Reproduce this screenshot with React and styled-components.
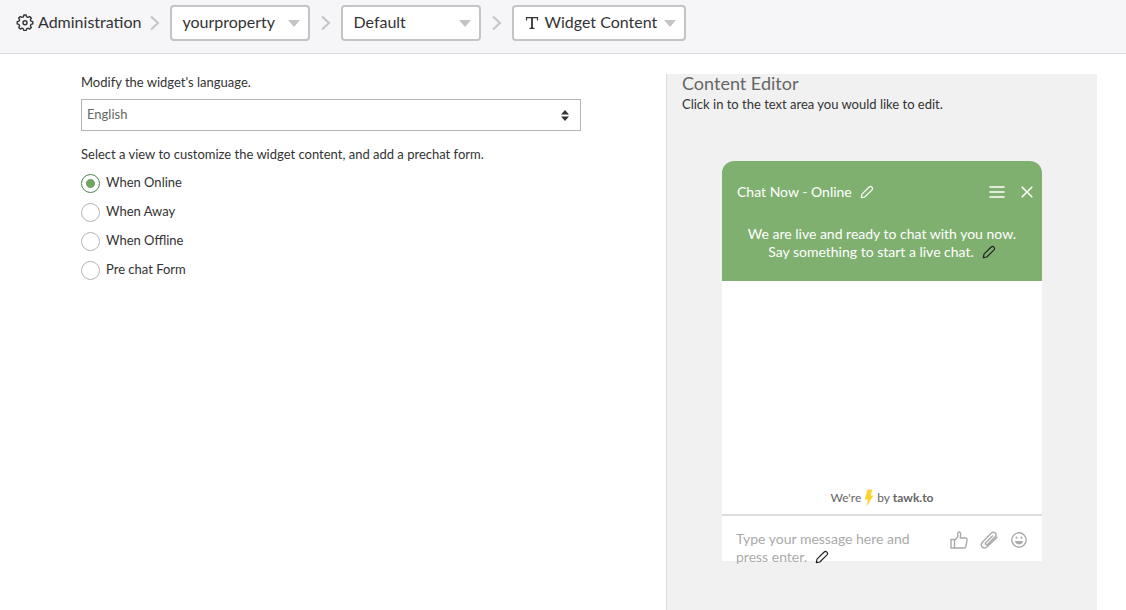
import React, { useState } from "react";
import styled, { createGlobalStyle } from "styled-components";

const GlobalStyle = createGlobalStyle`
  * {
    box-sizing: border-box;
  }

  body {
    margin: 0;
    background-color: #fff;
    color: #333;
    font-family: Lato, "Liberation Sans", sans-serif;
    font-size: 13px;
    line-height: 20px;
  }
`;

const Header = styled.header`
  display: flex;
  align-items: center;
  flex-wrap: wrap;
  gap: 10px;
  min-height: 54px;
  padding: 5px 16px 12px;
  background-color: #f6f6f9;
  border-bottom: 1px solid #ddd;
`;

const AdminLink = styled.a`
  display: flex;
  align-items: center;
  gap: 4px;
  margin-right: -2px;
  padding-bottom: 2px;
  color: #333;
  font-size: 16px;
  text-decoration: none;
`;

const Separator = styled.svg`
  width: 11px;
  height: 16px;
  fill: none;
  stroke: #c4c4c4;
  stroke-width: 2;
`;

const Crumb = styled.div`
  position: relative;
  width: ${(props) => (props.$wide ? "174px" : "140px")};
`;

const CrumbSelect = styled.select`
  appearance: none;
  display: block;
  width: 100%;
  height: 36px;
  padding: 0 20px 4px ${(props) => (props.$icon ? "30px" : "10px")};
  border: 2px solid #c4c4c4;
  border-radius: 4px;
  background-color: #fff;
  color: #333;
  font-family: inherit;
  font-size: 16px;
`;

const Caret = styled.svg`
  position: absolute;
  top: 15px;
  right: 10px;
  width: 12px;
  height: 7px;
  fill: #c4c4c4;
  pointer-events: none;
`;

const TextIcon = styled.svg`
  position: absolute;
  top: 11px;
  left: 13px;
  width: 14px;
  height: 14px;
  fill: none;
  stroke: #333;
  pointer-events: none;
`;

const Main = styled.main`
  display: grid;
  grid-template-columns: 585fr 431fr;
  padding: 20px 29px 0 81px;
`;

const Settings = styled.section`
  padding-right: 85px;
`;

const FieldLabel = styled.label`
  display: block;
  margin-bottom: 8px;
  line-height: 17px;
`;

const LanguageBox = styled.div`
  position: relative;
  margin-bottom: 13px;
`;

const LanguageSelect = styled.select`
  appearance: none;
  display: block;
  width: 100%;
  height: 32px;
  padding: 0 30px 2px 5px;
  border: 1px solid #b4b4b4;
  border-radius: 0;
  background-color: #fff;
  color: #666;
  font-family: inherit;
  font-size: 13px;
`;

const Sorter = styled.svg`
  position: absolute;
  top: 11px;
  right: 12px;
  width: 8px;
  height: 11px;
  fill: #333;
  pointer-events: none;
`;

const Views = styled.fieldset`
  margin: 0;
  padding: 0;
  border: none;
`;

const Legend = styled.legend`
  margin-bottom: 8px;
  padding: 0;
`;

const ViewOption = styled.label`
  display: flex;
  align-items: center;
  gap: 6px;
  height: 20px;
  margin-bottom: 9px;
  cursor: pointer;
`;

const Radio = styled.input`
  appearance: none;
  width: 19px;
  height: 19px;
  margin: 2px 0 0;
  border: 1px solid #b4b4b4;
  border-radius: 50%;
  background-color: #fff;

  &:checked {
    border-color: #4f8450;
    background-image: radial-gradient(circle, #6da561 4px, transparent 5px);
  }
`;

const Editor = styled.section`
  min-height: calc(100vh - 74px);
  border-left: 1px solid #ddd;
  background-color: #f1f1f1;
`;

const EditorHead = styled.div`
  padding: 0 15px;
`;

const EditorTitle = styled.h1`
  margin: 0 0 2px;
  color: #666;
  font-size: 18px;
  font-weight: 400;
  line-height: 18px;
`;

const EditorHint = styled.p`
  margin: 0 0 47px;
`;

const Widget = styled.div`
  display: flex;
  flex-direction: column;
  width: 320px;
  max-width: 100%;
  height: 400px;
  margin: 0 auto;
  border-radius: 12px 12px 0 0;
  background-color: #fff;
  font-size: 14px;
  line-height: 18px;
`;

const WidgetHead = styled.div`
  height: 120px;
  padding: 20px 8px 0 15px;
  border-radius: 12px 12px 0 0;
  background-color: #7fb070;
  color: #fff;
`;

const TitleRow = styled.div`
  display: flex;
  align-items: center;
  height: 22px;
  margin-bottom: 22px;
`;

const WidgetTitle = styled.span`
  flex: 1;
`;

const IconButton = styled.button`
  display: flex;
  margin: 0 0 0 ${(props) => props.$gap || "0"};
  padding: 0;
  border: none;
  background: none;
  color: inherit;
  cursor: pointer;
`;

const EditButton = styled(IconButton)`
  display: inline-flex;
  margin-left: 8px;
  color: ${(props) => (props.$light ? "#fff" : "#222")};
  vertical-align: -2px;
`;

const Greeting = styled.p`
  margin: 0;
  padding-right: 7px;
  text-align: center;
`;

const Branding = styled.div`
  display: flex;
  align-items: center;
  justify-content: center;
  gap: 3px;
  margin-top: auto;
  margin-bottom: 7px;
  color: #666;
  font-size: 12px;
`;

const Composer = styled.div`
  display: flex;
  height: 47px;
  padding: 14px 13px 0 14px;
  border-top: 2px solid #ddd;
  color: #aaa;
`;

const Prompt = styled.div`
  flex: 1;
`;

const Tools = styled.div`
  display: flex;
  align-items: flex-start;
  gap: 10px;
`;

const Line = styled.svg`
  display: block;
  fill: none;
  stroke: currentColor;
  stroke-linecap: round;
  stroke-linejoin: round;
`;

const Pencil = () => (
  <Line width="14" height="14" viewBox="0 0 14 14" strokeWidth="1.2">
    <path d="M1.3 12.7 2 9.2 9.2 2Q10.6 .8 11.9 2.1 13.2 3.4 12 4.8L4.8 12Z" />
  </Line>
);

const Gear = () => (
  <Line width="18" height="18" viewBox="0 0 18 18" strokeWidth="1.4">
    <path d="M7.9 2h2.2l.5 1.8 1.5.6 1.6-.9 1.6 1.6-.9 1.6.6 1.5 1.8.5v2.2l-1.8.5-.6 1.5.9 1.6-1.6 1.6-1.6-.9-1.5.6-.5 1.8H7.9l-.5-1.8-1.5-.6-1.6.9-1.6-1.6.9-1.6-.6-1.5-1.8-.5V8.7L3 8.2l.6-1.5-.9-1.6 1.6-1.6 1.6.9 1.5-.6z" />
    <circle cx="9" cy="9.8" r="2" />
  </Line>
);

const Chevron = () => (
  <Separator viewBox="0 0 11 16">
    <path d="m2 1.5 7 6.5-7 6.5" />
  </Separator>
);

const Down = () => (
  <Caret viewBox="0 0 12 7">
    <path d="M0 0h12L6 7z" />
  </Caret>
);

const views = ["When Online", "When Away", "When Offline", "Pre chat Form"];

const App = () => {
  const [view, setView] = useState("When Online");

  return (
    <>
      <GlobalStyle />
      <Header>
        <AdminLink href="#administration">
          <Gear />
          Administration
        </AdminLink>
        <Chevron />
        <Crumb>
          <CrumbSelect aria-label="Property">
            <option>yourproperty</option>
          </CrumbSelect>
          <Down />
        </Crumb>
        <Chevron />
        <Crumb>
          <CrumbSelect aria-label="Widget">
            <option>Default</option>
          </CrumbSelect>
          <Down />
        </Crumb>
        <Chevron />
        <Crumb $wide>
          <CrumbSelect aria-label="Section" $icon>
            <option>Widget Content</option>
          </CrumbSelect>
          <TextIcon viewBox="0 0 14 14">
            <path strokeWidth="1.2" d="M1.5 4.5V1.6h11v2.9M4.5 12.4h5" />
            <path strokeWidth="1.8" d="M7 1.6v10.8" />
          </TextIcon>
          <Down />
        </Crumb>
      </Header>
      <Main>
        <Settings>
          <FieldLabel htmlFor="language">Modify the widget's language.</FieldLabel>
          <LanguageBox>
            <LanguageSelect id="language">
              <option>English</option>
            </LanguageSelect>
            <Sorter viewBox="0 0 8 11">
              <path d="M4 0 8 4.5H0zM0 6.5h8L4 11z" />
            </Sorter>
          </LanguageBox>
          <Views>
            <Legend>
              Select a view to customize the widget content, and add a prechat form.
            </Legend>
            {views.map((name) => (
              <ViewOption key={name}>
                <Radio
                  type="radio"
                  name="view"
                  checked={view === name}
                  onChange={() => setView(name)}
                />
                {name}
              </ViewOption>
            ))}
          </Views>
        </Settings>
        <Editor>
          <EditorHead>
            <EditorTitle>Content Editor</EditorTitle>
            <EditorHint>Click in to the text area you would like to edit.</EditorHint>
          </EditorHead>
          <Widget>
            <WidgetHead>
              <TitleRow>
                <WidgetTitle>
                  Chat Now - Online
                  <EditButton $light aria-label="Edit title">
                    <Pencil />
                  </EditButton>
                </WidgetTitle>
                <IconButton aria-label="Menu">
                  <Line width="16" height="14" viewBox="0 0 16 14" strokeWidth="1.6">
                    <path d="M1 2h14M1 7h14M1 12h14" />
                  </Line>
                </IconButton>
                <IconButton aria-label="Close" $gap="15px">
                  <Line width="14" height="14" viewBox="0 0 14 14" strokeWidth="1.6">
                    <path d="m2.2 2.2 9.6 9.6M11.8 2.2l-9.6 9.6" />
                  </Line>
                </IconButton>
              </TitleRow>
              <Greeting>
                We are live and ready to chat with you now.
                <br />
                Say something to start a live chat.
                <EditButton aria-label="Edit greeting">
                  <Pencil />
                </EditButton>
              </Greeting>
            </WidgetHead>
            <Branding>
              We're
              <svg width="10" height="18" viewBox="0 0 10 18">
                <path fill="#fdd32f" d="M3.5.5h5L6.5 6.5h3L2.5 17.5l1.5-7H.8z" />
              </svg>
              <span>
                by <b>tawk.to</b>
              </span>
            </Branding>
            <Composer>
              <Prompt>
                Type your message here and
                <br />
                press enter.
                <EditButton aria-label="Edit placeholder">
                  <Pencil />
                </EditButton>
              </Prompt>
              <Tools>
                <IconButton aria-label="Rate">
                  <Line width="20" height="20" viewBox="0 0 20 20" strokeWidth="1.4">
                    <path d="M2 9.5h3.5V18H2zM5.5 10.5 8.8 6.8V3.4Q9 1.7 10.4 2 11.9 2.5 11.7 4.5L11.2 8h5.3Q18.3 8.2 18 10l-1 6.4Q16.7 18 15 18H5.5" />
                  </Line>
                </IconButton>
                <IconButton aria-label="Attach file">
                  <Line width="20" height="20" viewBox="0 0 20 20" strokeWidth="1.4">
                    <path d="m13.5 6-6.8 6.8q-.8 1 0 1.8.9.8 1.8 0l7.7-7.8q1.8-2.1.1-3.8-1.9-1.7-3.9.1L3.5 12q-2.4 2.7-.3 5 2.4 2.1 5-.2L18 7.2" />
                  </Line>
                </IconButton>
                <IconButton aria-label="Insert emoji">
                  <Line width="20" height="20" viewBox="0 0 20 20" strokeWidth="1.4">
                    <circle cx="10" cy="10" r="7.2" />
                    <path fill="currentColor" strokeWidth="1" d="M6.5 11.5h7Q13 14 10 14t-3.5-2.5z" />
                    <path strokeWidth="2" d="M7.5 7.6v.2M12.5 7.6v.2" />
                  </Line>
                </IconButton>
              </Tools>
            </Composer>
          </Widget>
        </Editor>
      </Main>
    </>
  );
};

export default App;
